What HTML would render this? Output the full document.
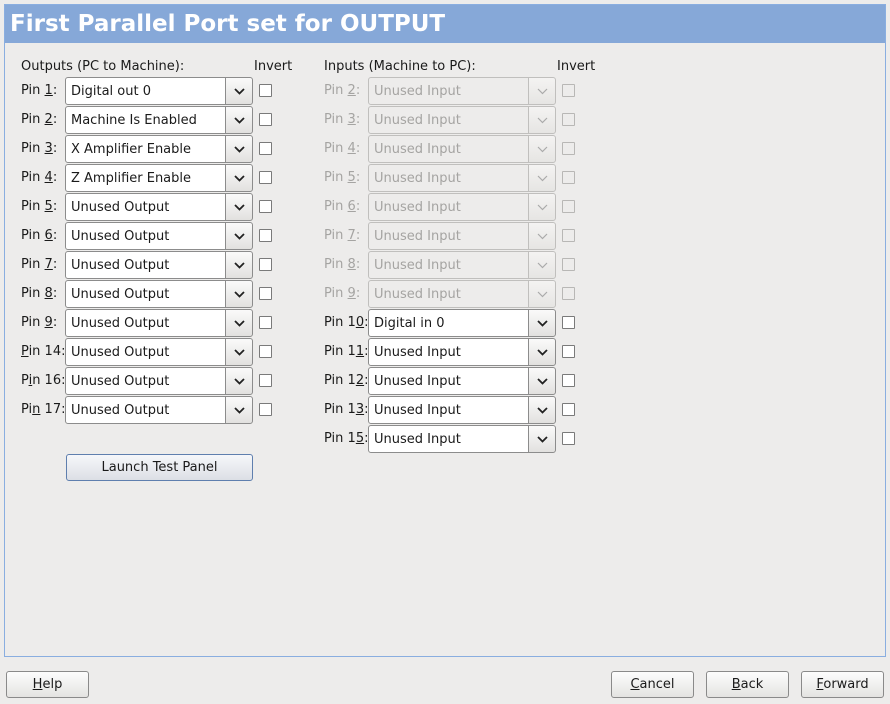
<!DOCTYPE html>
<html><head><meta charset="utf-8"><style>
*{box-sizing:border-box;margin:0;padding:0}
body{width:890px;height:704px;background:#edeceb;font-family:"DejaVu Sans","Liberation Sans",sans-serif;font-size:13px;color:#1a1a1a;position:relative;overflow:hidden}
.frame{position:absolute;left:4px;top:4px;width:882px;height:653px;border:1px solid #8aaee0;background:#edeceb}
.hdr{position:absolute;left:5px;top:5px;width:880px;height:38px;background:#86a8d8}
.title{position:absolute;left:5px;top:6px;font-size:23px;font-weight:bold;color:#fff;white-space:nowrap}
.a{position:absolute;white-space:nowrap;line-height:16px}
.c{position:absolute;width:188px;height:28px}
.c .t{position:absolute;left:0;top:0;width:161px;height:28px;background:#fff;border:1px solid #8c8c8c;border-radius:3px 0 0 3px;padding:6px 0 0 5px;line-height:16px}
.c .b{position:absolute;left:160px;top:0;width:28px;height:28px;border:1px solid #8c8c8c;border-radius:0 3px 3px 0;background:linear-gradient(#fafafa,#e2e1df)}
.c .b svg{position:absolute;left:8px;top:10px}
.c.d .t{background:#edeceb;border-color:#c0bfbd;color:#a5a4a2}
.c.d .b{border-color:#c0bfbd;background:linear-gradient(#f4f3f2,#e6e5e3)}
.k{position:absolute;width:13px;height:13px;border:1px solid #7a7a7a;background:#fff;border-radius:1px}
.k.d{border-color:#b8b7b5;background:#edeceb}
.g{color:#a5a4a2}
u{text-decoration:underline}
.btn{position:absolute;height:28px;border:1px solid #8a8a8a;border-radius:3px;background:linear-gradient(#fdfdfd,#e4e3e1);text-align:center;line-height:26px}
</style></head><body>
<div class="frame"></div>
<div class="hdr"><div class="title">First Parallel Port set for OUTPUT</div></div>

<div class="a" style="left:21px;top:59px">Outputs (PC to Machine):</div>
<div class="a" style="left:254px;top:59px">Invert</div>
<div class="a" style="left:324px;top:59px">Inputs (Machine to PC):</div>
<div class="a" style="left:557px;top:59px">Invert</div>

<div class="a" style="left:21px;top:83px">Pin <u>1</u>:</div><div class="c" style="left:65px;top:77px"><div class="t">Digital out 0</div><div class="b"><svg width="11" height="7"><path d="M1 1L5.5 5.5L10 1" stroke="#222" stroke-width="1.8" fill="none"/></svg></div></div><div class="k" style="left:259px;top:84px"></div>
<div class="a" style="left:21px;top:112px">Pin <u>2</u>:</div><div class="c" style="left:65px;top:106px"><div class="t">Machine Is Enabled</div><div class="b"><svg width="11" height="7"><path d="M1 1L5.5 5.5L10 1" stroke="#222" stroke-width="1.8" fill="none"/></svg></div></div><div class="k" style="left:259px;top:113px"></div>
<div class="a" style="left:21px;top:141px">Pin <u>3</u>:</div><div class="c" style="left:65px;top:135px"><div class="t">X Amplifier Enable</div><div class="b"><svg width="11" height="7"><path d="M1 1L5.5 5.5L10 1" stroke="#222" stroke-width="1.8" fill="none"/></svg></div></div><div class="k" style="left:259px;top:142px"></div>
<div class="a" style="left:21px;top:170px">Pin <u>4</u>:</div><div class="c" style="left:65px;top:164px"><div class="t">Z Amplifier Enable</div><div class="b"><svg width="11" height="7"><path d="M1 1L5.5 5.5L10 1" stroke="#222" stroke-width="1.8" fill="none"/></svg></div></div><div class="k" style="left:259px;top:171px"></div>
<div class="a" style="left:21px;top:199px">Pin <u>5</u>:</div><div class="c" style="left:65px;top:193px"><div class="t">Unused Output</div><div class="b"><svg width="11" height="7"><path d="M1 1L5.5 5.5L10 1" stroke="#222" stroke-width="1.8" fill="none"/></svg></div></div><div class="k" style="left:259px;top:200px"></div>
<div class="a" style="left:21px;top:228px">Pin <u>6</u>:</div><div class="c" style="left:65px;top:222px"><div class="t">Unused Output</div><div class="b"><svg width="11" height="7"><path d="M1 1L5.5 5.5L10 1" stroke="#222" stroke-width="1.8" fill="none"/></svg></div></div><div class="k" style="left:259px;top:229px"></div>
<div class="a" style="left:21px;top:257px">Pin <u>7</u>:</div><div class="c" style="left:65px;top:251px"><div class="t">Unused Output</div><div class="b"><svg width="11" height="7"><path d="M1 1L5.5 5.5L10 1" stroke="#222" stroke-width="1.8" fill="none"/></svg></div></div><div class="k" style="left:259px;top:258px"></div>
<div class="a" style="left:21px;top:286px">Pin <u>8</u>:</div><div class="c" style="left:65px;top:280px"><div class="t">Unused Output</div><div class="b"><svg width="11" height="7"><path d="M1 1L5.5 5.5L10 1" stroke="#222" stroke-width="1.8" fill="none"/></svg></div></div><div class="k" style="left:259px;top:287px"></div>
<div class="a" style="left:21px;top:315px">Pin <u>9</u>:</div><div class="c" style="left:65px;top:309px"><div class="t">Unused Output</div><div class="b"><svg width="11" height="7"><path d="M1 1L5.5 5.5L10 1" stroke="#222" stroke-width="1.8" fill="none"/></svg></div></div><div class="k" style="left:259px;top:316px"></div>
<div class="a" style="left:21px;top:344px"><u>P</u>in 14:</div><div class="c" style="left:65px;top:338px"><div class="t">Unused Output</div><div class="b"><svg width="11" height="7"><path d="M1 1L5.5 5.5L10 1" stroke="#222" stroke-width="1.8" fill="none"/></svg></div></div><div class="k" style="left:259px;top:345px"></div>
<div class="a" style="left:21px;top:373px">P<u>i</u>n 16:</div><div class="c" style="left:65px;top:367px"><div class="t">Unused Output</div><div class="b"><svg width="11" height="7"><path d="M1 1L5.5 5.5L10 1" stroke="#222" stroke-width="1.8" fill="none"/></svg></div></div><div class="k" style="left:259px;top:374px"></div>
<div class="a" style="left:21px;top:402px">Pi<u>n</u> 17:</div><div class="c" style="left:65px;top:396px"><div class="t">Unused Output</div><div class="b"><svg width="11" height="7"><path d="M1 1L5.5 5.5L10 1" stroke="#222" stroke-width="1.8" fill="none"/></svg></div></div><div class="k" style="left:259px;top:403px"></div>

<div class="a g" style="left:324px;top:83px">Pin <u>2</u>:</div><div class="c d" style="left:368px;top:77px"><div class="t">Unused Input</div><div class="b"><svg width="11" height="7"><path d="M1 1L5.5 5.5L10 1" stroke="#aaa" stroke-width="1.2" fill="none"/></svg></div></div><div class="k d" style="left:562px;top:84px"></div>
<div class="a g" style="left:324px;top:112px">Pin <u>3</u>:</div><div class="c d" style="left:368px;top:106px"><div class="t">Unused Input</div><div class="b"><svg width="11" height="7"><path d="M1 1L5.5 5.5L10 1" stroke="#aaa" stroke-width="1.2" fill="none"/></svg></div></div><div class="k d" style="left:562px;top:113px"></div>
<div class="a g" style="left:324px;top:141px">Pin <u>4</u>:</div><div class="c d" style="left:368px;top:135px"><div class="t">Unused Input</div><div class="b"><svg width="11" height="7"><path d="M1 1L5.5 5.5L10 1" stroke="#aaa" stroke-width="1.2" fill="none"/></svg></div></div><div class="k d" style="left:562px;top:142px"></div>
<div class="a g" style="left:324px;top:170px">Pin <u>5</u>:</div><div class="c d" style="left:368px;top:164px"><div class="t">Unused Input</div><div class="b"><svg width="11" height="7"><path d="M1 1L5.5 5.5L10 1" stroke="#aaa" stroke-width="1.2" fill="none"/></svg></div></div><div class="k d" style="left:562px;top:171px"></div>
<div class="a g" style="left:324px;top:199px">Pin <u>6</u>:</div><div class="c d" style="left:368px;top:193px"><div class="t">Unused Input</div><div class="b"><svg width="11" height="7"><path d="M1 1L5.5 5.5L10 1" stroke="#aaa" stroke-width="1.2" fill="none"/></svg></div></div><div class="k d" style="left:562px;top:200px"></div>
<div class="a g" style="left:324px;top:228px">Pin <u>7</u>:</div><div class="c d" style="left:368px;top:222px"><div class="t">Unused Input</div><div class="b"><svg width="11" height="7"><path d="M1 1L5.5 5.5L10 1" stroke="#aaa" stroke-width="1.2" fill="none"/></svg></div></div><div class="k d" style="left:562px;top:229px"></div>
<div class="a g" style="left:324px;top:257px">Pin <u>8</u>:</div><div class="c d" style="left:368px;top:251px"><div class="t">Unused Input</div><div class="b"><svg width="11" height="7"><path d="M1 1L5.5 5.5L10 1" stroke="#aaa" stroke-width="1.2" fill="none"/></svg></div></div><div class="k d" style="left:562px;top:258px"></div>
<div class="a g" style="left:324px;top:286px">Pin <u>9</u>:</div><div class="c d" style="left:368px;top:280px"><div class="t">Unused Input</div><div class="b"><svg width="11" height="7"><path d="M1 1L5.5 5.5L10 1" stroke="#aaa" stroke-width="1.2" fill="none"/></svg></div></div><div class="k d" style="left:562px;top:287px"></div>

<div class="a" style="left:324px;top:315px">Pin 1<u>0</u>:</div><div class="c" style="left:368px;top:309px"><div class="t">Digital in 0</div><div class="b"><svg width="11" height="7"><path d="M1 1L5.5 5.5L10 1" stroke="#222" stroke-width="1.8" fill="none"/></svg></div></div><div class="k" style="left:562px;top:316px"></div>
<div class="a" style="left:324px;top:344px">Pin 1<u>1</u>:</div><div class="c" style="left:368px;top:338px"><div class="t">Unused Input</div><div class="b"><svg width="11" height="7"><path d="M1 1L5.5 5.5L10 1" stroke="#222" stroke-width="1.8" fill="none"/></svg></div></div><div class="k" style="left:562px;top:345px"></div>
<div class="a" style="left:324px;top:373px">Pin 1<u>2</u>:</div><div class="c" style="left:368px;top:367px"><div class="t">Unused Input</div><div class="b"><svg width="11" height="7"><path d="M1 1L5.5 5.5L10 1" stroke="#222" stroke-width="1.8" fill="none"/></svg></div></div><div class="k" style="left:562px;top:374px"></div>
<div class="a" style="left:324px;top:402px">Pin 1<u>3</u>:</div><div class="c" style="left:368px;top:396px"><div class="t">Unused Input</div><div class="b"><svg width="11" height="7"><path d="M1 1L5.5 5.5L10 1" stroke="#222" stroke-width="1.8" fill="none"/></svg></div></div><div class="k" style="left:562px;top:403px"></div>
<div class="a" style="left:324px;top:431px">Pin 1<u>5</u>:</div><div class="c" style="left:368px;top:425px"><div class="t">Unused Input</div><div class="b"><svg width="11" height="7"><path d="M1 1L5.5 5.5L10 1" stroke="#222" stroke-width="1.8" fill="none"/></svg></div></div><div class="k" style="left:562px;top:432px"></div>

<div class="btn" style="left:66px;top:454px;width:187px;height:27px;border-color:#5f7fae;background:linear-gradient(#f6f7fa,#dcdfe5);line-height:25px">Launch Test Panel</div>

<div class="btn" style="left:6px;top:671px;width:83px;height:27px;line-height:26px"><u>H</u>elp</div>
<div class="btn" style="left:611px;top:671px;width:83px;height:27px;line-height:26px"><u>C</u>ancel</div>
<div class="btn" style="left:706px;top:671px;width:83px;height:27px;line-height:26px"><u>B</u>ack</div>
<div class="btn" style="left:801px;top:671px;width:83px;height:27px;line-height:26px"><u>F</u>orward</div>
</body></html>
